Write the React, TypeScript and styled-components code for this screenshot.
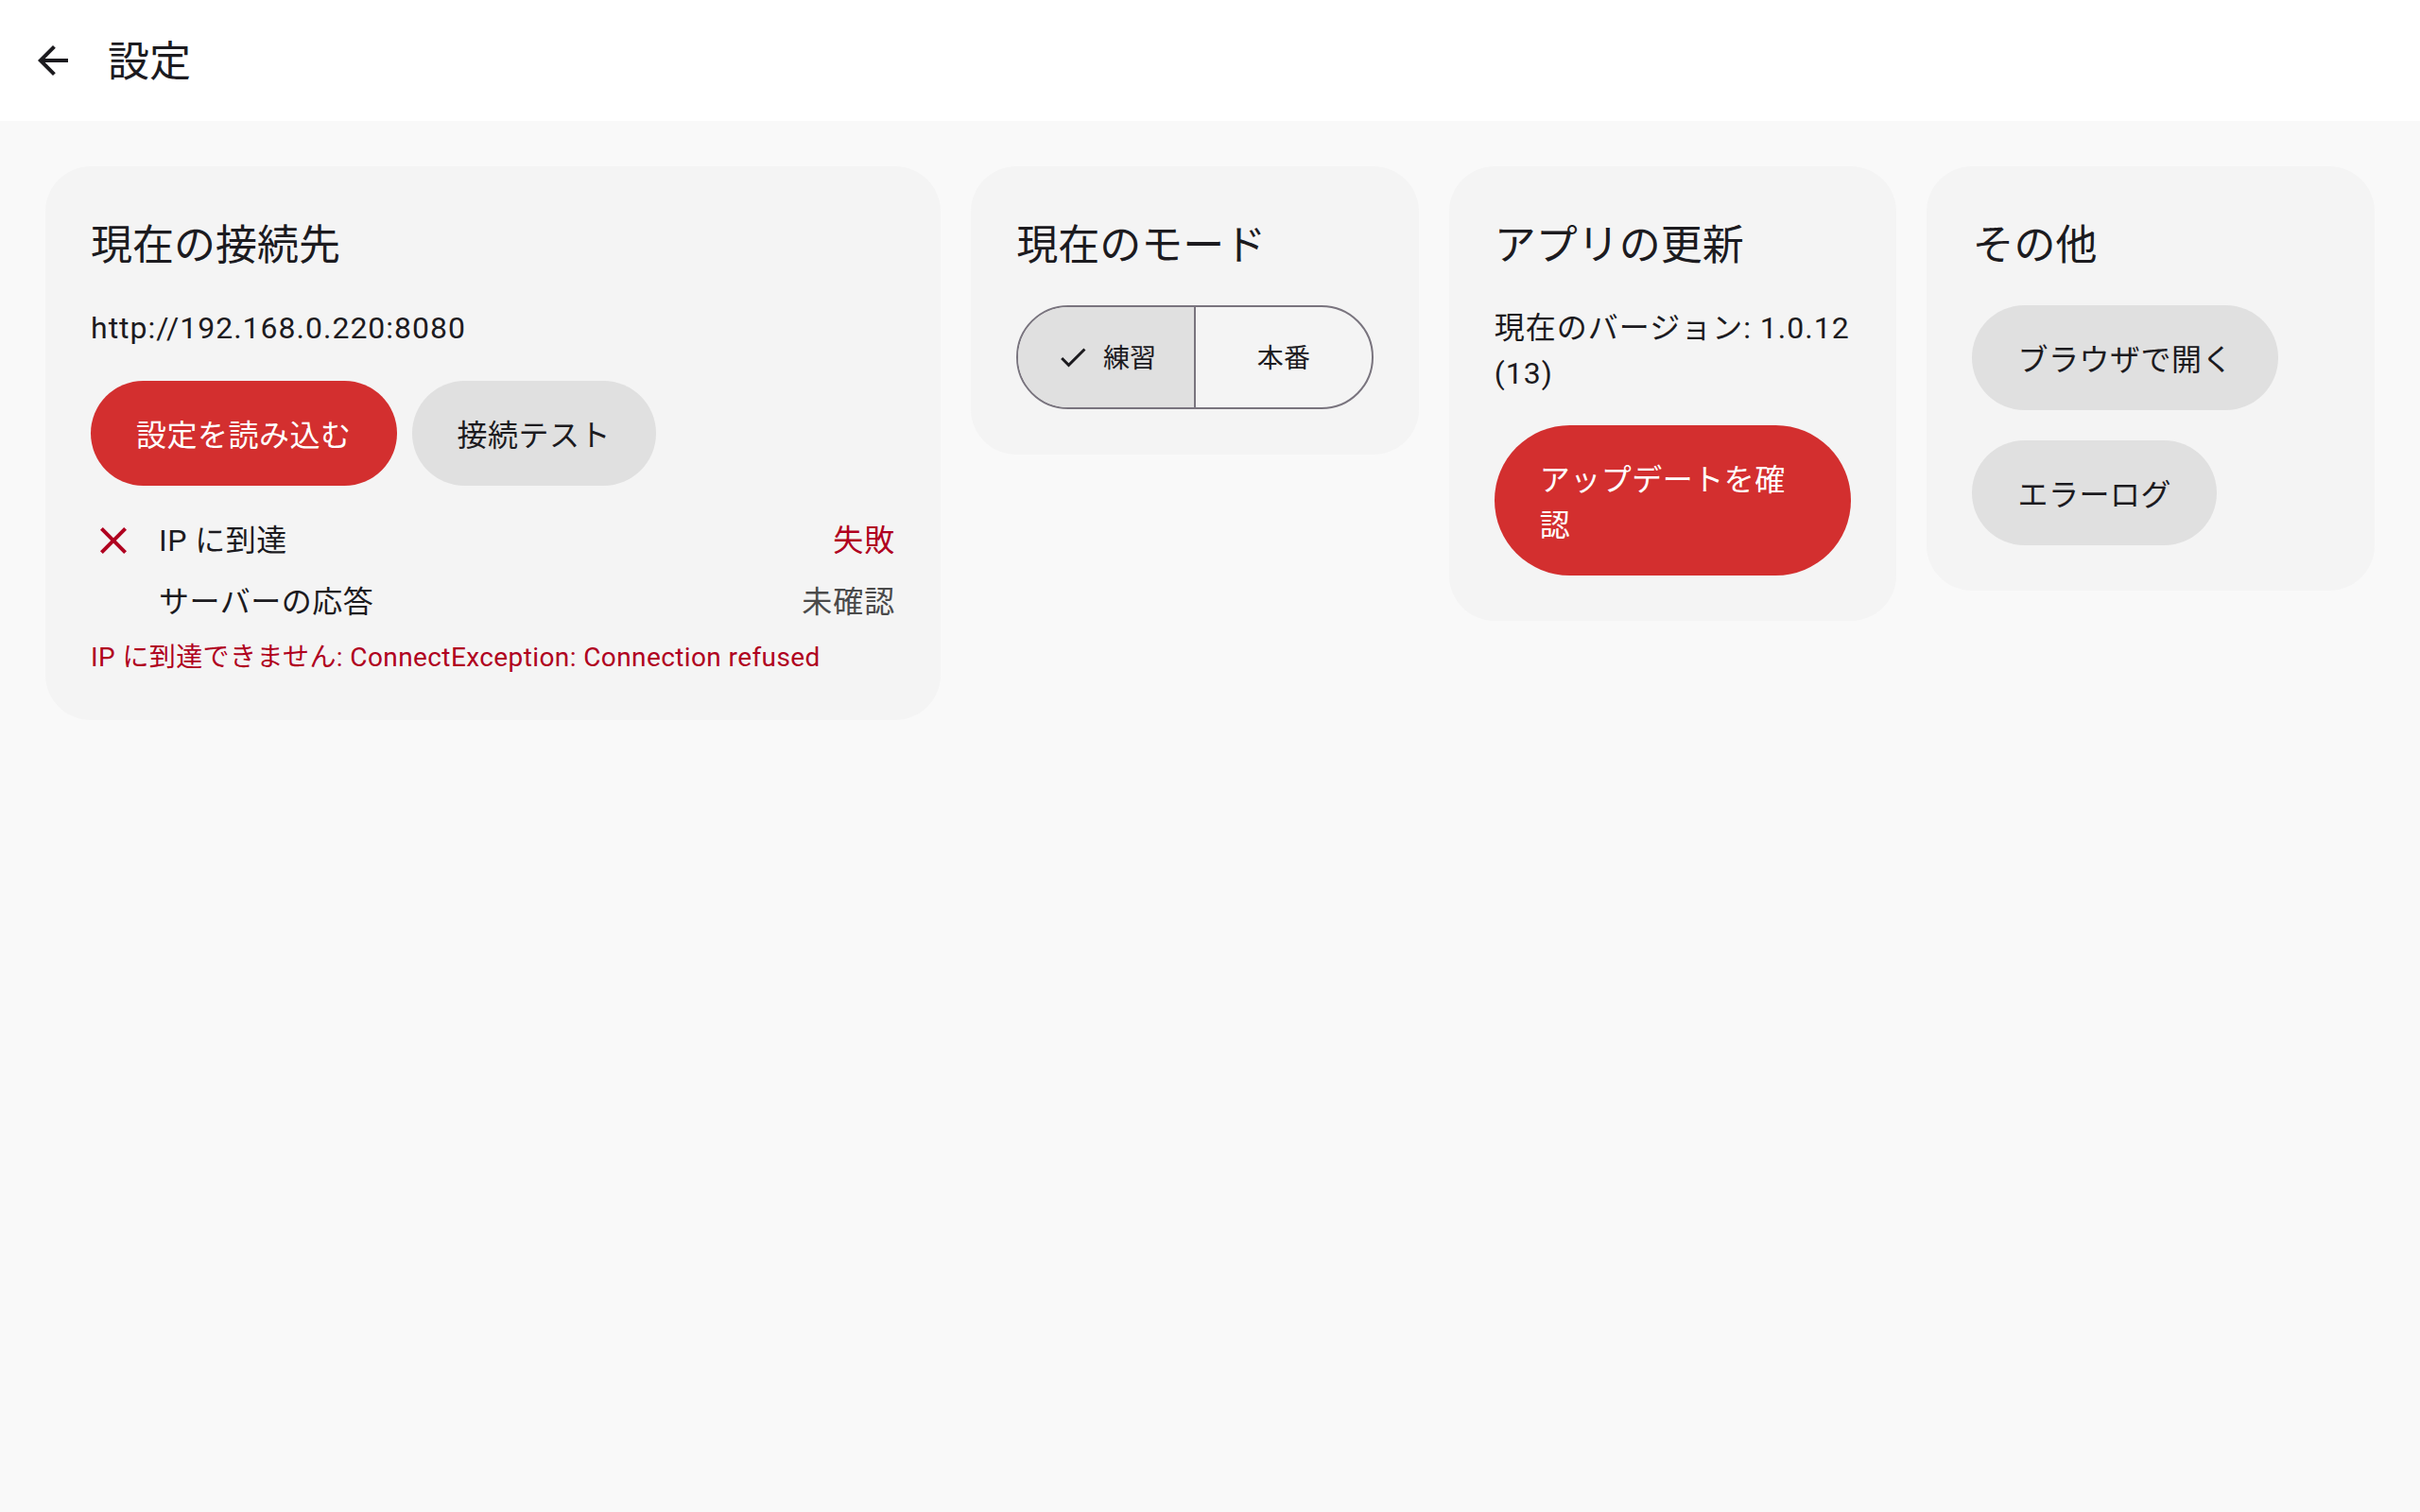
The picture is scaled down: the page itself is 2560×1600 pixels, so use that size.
import React from 'react';
import styled, { createGlobalStyle, css } from 'styled-components';

const GlobalStyle = createGlobalStyle`
  html, body {
    margin: 0;
    padding: 0;
  }
  body {
    min-height: 100vh;
    background: #f9f9f9;
    color: #1c1b1f;
    font-family: Roboto, "Noto Sans CJK JP", sans-serif;
  }
  *, *::before, *::after {
    box-sizing: border-box;
  }
`;

const Page = styled.div`
  min-height: 100vh;
  background: #f9f9f9;
`;

const TopBar = styled.header`
  height: 128px;
  background: #ffffff;
  display: flex;
  align-items: center;
  padding-left: 32px;
  gap: 34px;
`;

const IconButton = styled.button`
  width: 48px;
  height: 48px;
  padding: 0;
  border: none;
  background: none;
  display: flex;
  align-items: center;
  justify-content: center;
  color: #1c1b1f;
  cursor: pointer;
`;

const TopTitle = styled.h1`
  margin: 0;
  padding-top: 4px;
  font-size: 44px;
  font-weight: 400;
  line-height: 56px;
  color: #1c1b1f;
`;

const Content = styled.main`
  display: grid;
  grid-template-columns: minmax(0, 2fr) repeat(3, minmax(0, 1fr));
  align-items: start;
  gap: 32px;
  padding: 48px;
`;

const Card = styled.section`
  min-width: 0;
  background: #f4f4f4;
  border-radius: 48px;
  padding: 48px;
  display: flex;
  flex-direction: column;
  align-items: stretch;
`;

const CardTitle = styled.h2`
  margin: 8px 0 35px;
  font-size: 44px;
  font-weight: 400;
  line-height: 56px;
  color: #1c1b1f;
`;

const BodyText = styled.p`
  margin: 0;
  font-size: 32px;
  line-height: 48px;
  letter-spacing: 1px;
  color: #1c1b1f;
`;

const ButtonRow = styled.div`
  display: flex;
  gap: 16px;
  margin-top: 32px;
`;

const ButtonStack = styled.div`
  display: flex;
  flex-direction: column;
  align-items: flex-start;
  gap: 32px;
`;

const pillStyles = css`
  border: none;
  border-radius: 999px;
  padding: 34px 48px 29px;
  font-family: inherit;
  font-size: 32px;
  line-height: 48px;
  letter-spacing: 0.5px;
  text-align: left;
  cursor: pointer;
  max-width: 100%;
`;

const PillButton = styled.button<{ primary?: boolean }>`
  ${pillStyles}
  ${({ primary }) =>
    primary
      ? css`
          background: #d32f2f;
          color: #ffffff;
        `
      : css`
          background: #e0e0e0;
          color: #1c1b1f;
        `}
`;

const UpdateButton = styled(PillButton)`
  align-self: flex-start;
  margin-top: 31px;
`;

const StatusList = styled.div`
  display: flex;
  flex-direction: column;
  gap: 17px;
  margin-top: 34px;
`;

const StatusRow = styled.div`
  display: flex;
  align-items: center;
  gap: 24px;
  height: 48px;
`;

const StatusIcon = styled.span`
  width: 48px;
  height: 48px;
  display: flex;
  align-items: center;
  justify-content: center;
  flex-shrink: 0;
  color: #b00020;
`;

const StatusLabel = styled.span`
  flex: 1;
  font-size: 32px;
  line-height: 48px;
  letter-spacing: 0.5px;
  color: #1c1b1f;
`;

const StatusValue = styled.span<{ failed?: boolean }>`
  font-size: 32px;
  line-height: 48px;
  letter-spacing: 1px;
  color: ${({ failed }) => (failed ? '#b00020' : '#4a4a4a')};
`;

const ErrorText = styled.p`
  margin: 17px 0 0;
  font-size: 28px;
  line-height: 36px;
  letter-spacing: 0.4px;
  color: #b00020;
`;

const Segmented = styled.div`
  display: flex;
  height: 110px;
  border: 2px solid #79747e;
  border-radius: 999px;
  overflow: hidden;
`;

const Segment = styled.button<{ selected?: boolean }>`
  flex: 1;
  border: none;
  padding: 4px 0 0;
  display: flex;
  align-items: center;
  justify-content: center;
  gap: 14px;
  font-family: inherit;
  font-size: 28px;
  line-height: 40px;
  letter-spacing: 0.2px;
  color: #1c1b1f;
  background: ${({ selected }) => (selected ? '#e0e0e0' : 'transparent')};
  cursor: pointer;
  & + & {
    border-left: 2px solid #79747e;
  }
  svg {
    margin-top: -4px;
  }
`;

const ArrowBack = () => (
  <svg width="48" height="48" viewBox="0 0 24 24" fill="currentColor">
    <path d="M20 11H7.83l5.59-5.59L12 4l-8 8 8 8 1.41-1.41L7.83 13H20v-2z" />
  </svg>
);

const CloseIcon = () => (
  <svg width="48" height="48" viewBox="0 0 24 24" fill="currentColor">
    <path d="M19 6.41L17.59 5 12 10.59 6.41 5 5 6.41 10.59 12 5 17.59 6.41 19 12 13.41 17.59 19 19 17.59 13.41 12z" />
  </svg>
);

const CheckIcon = () => (
  <svg width="36" height="36" viewBox="0 0 24 24" fill="currentColor">
    <path d="M9 16.17L4.83 12l-1.42 1.41L9 19 21 7l-1.41-1.41z" />
  </svg>
);

export default function App() {
  return (
    <>
      <GlobalStyle />
      <Page>
        <TopBar>
          <IconButton aria-label="戻る">
            <ArrowBack />
          </IconButton>
          <TopTitle>設定</TopTitle>
        </TopBar>

        <Content>
          <Card>
            <CardTitle>現在の接続先</CardTitle>
            <BodyText>http://192.168.0.220:8080</BodyText>
            <ButtonRow>
              <PillButton primary>設定を読み込む</PillButton>
              <PillButton>接続テスト</PillButton>
            </ButtonRow>
            <StatusList>
              <StatusRow>
                <StatusIcon>
                  <CloseIcon />
                </StatusIcon>
                <StatusLabel>IP に到達</StatusLabel>
                <StatusValue failed>失敗</StatusValue>
              </StatusRow>
              <StatusRow>
                <StatusIcon />
                <StatusLabel>サーバーの応答</StatusLabel>
                <StatusValue>未確認</StatusValue>
              </StatusRow>
            </StatusList>
            <ErrorText>IP に到達できません: ConnectException: Connection refused</ErrorText>
          </Card>

          <Card>
            <CardTitle>現在のモード</CardTitle>
            <Segmented>
              <Segment selected>
                <CheckIcon />
                練習
              </Segment>
              <Segment>本番</Segment>
            </Segmented>
          </Card>

          <Card>
            <CardTitle>アプリの更新</CardTitle>
            <BodyText>現在のバージョン: 1.0.12 (13)</BodyText>
            <UpdateButton primary>アップデートを確認</UpdateButton>
          </Card>

          <Card>
            <CardTitle>その他</CardTitle>
            <ButtonStack>
              <PillButton>ブラウザで開く</PillButton>
              <PillButton>エラーログ</PillButton>
            </ButtonStack>
          </Card>
        </Content>
      </Page>
    </>
  );
}
